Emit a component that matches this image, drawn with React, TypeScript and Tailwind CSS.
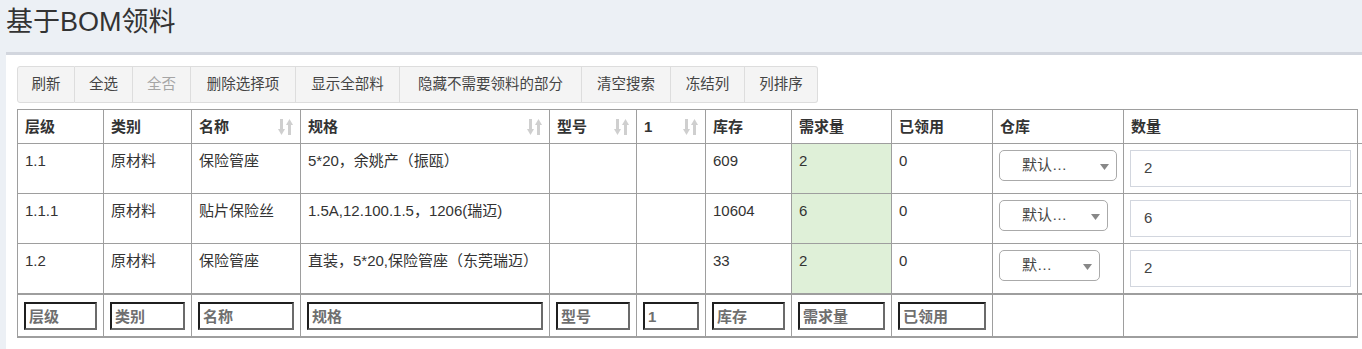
import React from "react";

const FONT = { fontFamily: '"Liberation Sans", "Noto Sans CJK SC", Arial, sans-serif' };

function SortIcon() {
  return (
    <svg width="15" height="16" viewBox="0 0 15 16" className="shrink-0">
      <g fill="#cfcfcf">
        <rect x="2" y="0" width="3" height="11" />
        <polygon points="0,10 7,10 3.5,16" />
        <rect x="10" y="5" width="3" height="11" />
        <polygon points="8,6 15,6 11.5,0" />
      </g>
    </svg>
  );
}

const buttons = [
  { t: "刷新", w: "w-[58px]" },
  { t: "全选", w: "w-[58px]" },
  { t: "全否", w: "w-[58px]", dis: true },
  { t: "删除选择项", w: "w-[105px]" },
  { t: "显示全部料", w: "w-[104px]" },
  { t: "隐藏不需要领料的部分", w: "w-[182px]" },
  { t: "清空搜索", w: "w-[89px]" },
  { t: "冻结列", w: "w-[74px]" },
  { t: "列排序", w: "w-[73px]" },
];

const headers = [
  { t: "层级" },
  { t: "类别" },
  { t: "名称", sort: true },
  { t: "规格", sort: true },
  { t: "型号", sort: true },
  { t: "1", sort: true },
  { t: "库存" },
  { t: "需求量" },
  { t: "已领用" },
  { t: "仓库" },
  { t: "数量" },
];

const rows = [
  { lv: "1.1", type: "原材料", name: "保险管座", spec: "5*20，余姚产（振瓯）", stock: "609", need: "2", used: "0", selW: "w-[118px]", sel: "默认…", qty: "2" },
  { lv: "1.1.1", type: "原材料", name: "贴片保险丝", spec: "1.5A,12.100.1.5，1206(瑞迈)", stock: "10604", need: "6", used: "0", selW: "w-[109px]", sel: "默认…", qty: "6" },
  { lv: "1.2", type: "原材料", name: "保险管座", spec: "直装，5*20,保险管座（东莞瑞迈）", stock: "33", need: "2", used: "0", selW: "w-[101px]", sel: "默…", qty: "2" },
];

const footer = ["层级", "类别", "名称", "规格", "型号", "1", "库存", "需求量", "已领用"];

const colW = ["w-[86px]", "w-[88px]", "w-[109px]", "w-[249px]", "w-[87px]", "w-[69px]", "w-[86px]", "w-[100px]", "w-[101px]", "w-[131px]", "w-[234px]", "w-[40px]"];

export default function App() {
  const td = "border border-[#9e9e9e] px-[7px] py-[6px] align-top leading-[21px]";
  return (
    <div className="h-[349px] w-[1362px] overflow-hidden bg-[#ecf0f5] text-[#333]" style={FONT}>
      <div className="flex h-[52px] items-center pb-[8px] pl-[6px]">
        <h1 className="text-[27px] leading-[30px] font-normal text-[#333]">基于BOM领料</h1>
      </div>
      <div className="ml-[6px] h-[297px] overflow-hidden border-t-[3px] border-[#d2d6de] bg-white pl-[11px] pt-[11px]">
        <div className="flex">
          {buttons.map((b, i) => (
            <div
              key={b.t}
              className={`${b.w} flex h-[37px] shrink-0 items-center justify-center border-y border-r border-[#ddd] bg-[#f4f4f4] text-[14.5px] ${
                b.dis ? "text-[#a5a5a5]" : "text-[#444]"
              } ${i === 0 ? "rounded-l-[3px] border-l" : ""} ${i === buttons.length - 1 ? "rounded-r-[3px]" : ""}`}
            >
              {b.t}
            </div>
          ))}
        </div>
        <table className="mt-[6px] w-[1380px] table-fixed border-collapse text-[15px]">
          <colgroup>
            {colW.map((w, i) => (
              <col key={i} className={w} />
            ))}
          </colgroup>
          <thead>
            <tr>
              {headers.map((h) => (
                <th key={h.t} className={`${td} text-left font-bold`}>
                  <div className="flex items-center justify-between">
                    <span>{h.t}</span>
                    {h.sort && <SortIcon />}
                  </div>
                </th>
              ))}
              <th className="border-b border-l border-[#9e9e9e]"></th>
            </tr>
          </thead>
          <tbody>
            {rows.map((r, i) => {
              const last = i === rows.length - 1;
              const b = last ? "border-b-2" : "";
              return (
                <tr key={r.lv} className="h-[49px]">
                  <td className={`${td} ${b}`}>{r.lv}</td>
                  <td className={`${td} ${b}`}>{r.type}</td>
                  <td className={`${td} ${b}`}>{r.name}</td>
                  <td className={`${td} ${b} whitespace-nowrap`}>{r.spec}</td>
                  <td className={`${td} ${b}`}></td>
                  <td className={`${td} ${b}`}></td>
                  <td className={`${td} ${b}`}>{r.stock}</td>
                  <td className={`${td} ${b} bg-[#dff0d8]`}>{r.need}</td>
                  <td className={`${td} ${b}`}>{r.used}</td>
                  <td className={`border border-[#9e9e9e] ${b} px-[6px] py-[6px] align-top`}>
                    <div className={`${r.selW} relative flex h-[31px] items-center rounded-[5px] border border-[#aaa] bg-white pl-[22px] text-[15px] text-[#444]`}>
                      <span>{r.sel}</span>
                      <svg width="9" height="6" viewBox="0 0 9 6" className="absolute right-[7px] top-[13px]">
                        <polygon points="0,0 9,0 4.5,6" fill="#888" />
                      </svg>
                    </div>
                  </td>
                  <td className={`border border-[#9e9e9e] ${b} px-[6px] py-[6px] align-top`}>
                    <div className="flex h-[37px] w-full items-center border border-[#d2d6de] pl-[13px] text-[15px] text-[#444]">
                      {r.qty}
                    </div>
                  </td>
                  <td className={`border-b border-l border-[#9e9e9e] ${b}`}></td>
                </tr>
              );
            })}
          </tbody>
          <tfoot>
            <tr>
              {footer.map((f) => (
                <td key={f} className="border border-b-2 border-[#9e9e9e] px-[6px] pb-[6px] pt-[7px]">
                  <input
                    readOnly
                    placeholder={f}
                    className="block h-[28px] w-full border-2 border-t-[#1f1f1f] border-l-[#1f1f1f] border-r-[#6b6b6b] border-b-[#6b6b6b] bg-white px-[3px] text-[15px] font-bold outline-none placeholder:text-[#6f6f6f]"
                    style={FONT}
                  />
                </td>
              ))}
              <td className="border border-b-2 border-[#9e9e9e]"></td>
              <td className="border border-b-2 border-[#9e9e9e]"></td>
              <td className="border-l border-t border-[#9e9e9e]"></td>
            </tr>
          </tfoot>
        </table>
      </div>
    </div>
  );
}
